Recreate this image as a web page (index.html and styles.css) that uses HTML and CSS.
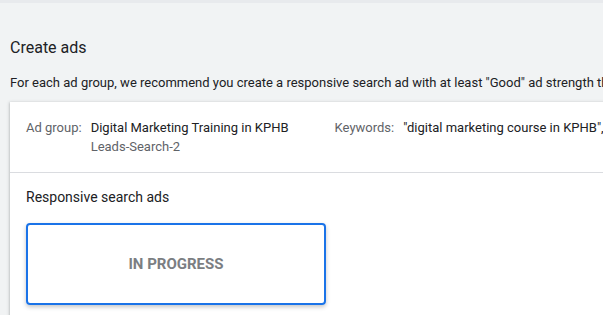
FILE: index.html
```html
<!DOCTYPE html>
<html lang="en">
<head>
    <meta charset="UTF-8">
    <meta name="viewport" content="width=device-width, initial-scale=1.0">
    <title>Create ads</title>
    <link rel="stylesheet" href="styles.css">
</head>
<body>
    <div class="top-strip"></div>

    <div class="page">
        <h1 class="page-title">Create ads</h1>
        <p class="page-intro">For each ad group, we recommend you create a responsive search ad with at least "Good" ad strength that uses your keywords.</p>

        <div class="card">
            <div class="group-row">
                <div class="field">
                    <span class="field-label">Ad group:</span>
                    <div class="field-value">
                        <div>Digital Marketing Training in KPHB</div>
                        <div class="field-sub">Leads-Search-2</div>
                    </div>
                </div>
                <div class="field">
                    <span class="field-label">Keywords:</span>
                    <div class="field-value">
                        <div>"digital marketing course in KPHB", "digital marketing training in KPHB"</div>
                    </div>
                </div>
            </div>

            <div class="ads-section">
                <div class="section-title">Responsive search ads</div>
                <div class="ad-tile">IN PROGRESS</div>
            </div>
        </div>
    </div>
</body>
</html>
```

FILE: styles.css
```css
* {
    margin: 0;
    padding: 0;
    box-sizing: border-box;
}

html, body {
    height: 100%;
    overflow: hidden;
}

body {
    font-family: Roboto, 'Liberation Sans', Arial, sans-serif;
    background: #f1f3f4;
    color: #202124;
    width: 603px;
}

.top-strip {
    height: 3px;
    background: #e8eaed;
}

.page {
    padding: 33px 0 0 10px;
}

.page-title {
    font-size: 16px;
    font-weight: 400;
    line-height: 24px;
    color: #202124;
}

.page-intro {
    margin-top: 14px;
    font-size: 13px;
    line-height: 18px;
    white-space: nowrap;
    color: #202124;
}

.card {
    margin-top: 10px;
    background: #fff;
    width: 700px;
    box-shadow: 0 1px 2px rgba(60, 64, 67, 0.3), 0 1px 3px 1px rgba(60, 64, 67, 0.15);
}

.group-row {
    display: flex;
    gap: 46px;
    padding: 16px 16px 16px;
    border-bottom: 1px solid #dadce0;
    font-size: 13px;
    line-height: 19px;
    white-space: nowrap;
}

.field {
    display: flex;
    gap: 9px;
}

.field-label {
    color: #5f6368;
}

.field-sub {
    color: #5f6368;
}

.ads-section {
    padding: 14px 16px 16px;
}

.section-title {
    font-size: 14px;
    line-height: 20px;
}

.ad-tile {
    margin-top: 16px;
    width: 300px;
    height: 82px;
    border: 2px solid #1a73e8;
    border-radius: 4px;
    box-shadow: 0 2px 4px rgba(60, 64, 67, 0.3);
    display: flex;
    align-items: center;
    justify-content: center;
    font-size: 15px;
    font-weight: 700;
    color: #7b7e82;
}
```
